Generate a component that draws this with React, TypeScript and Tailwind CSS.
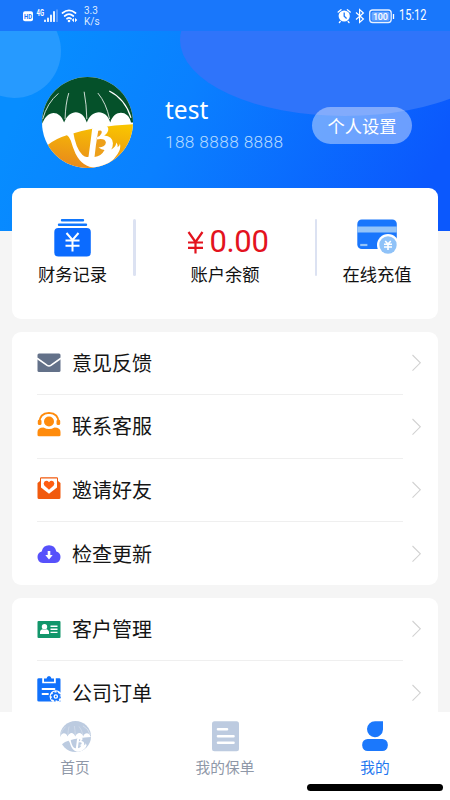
import type { ReactNode } from "react";

const Logo = ({ className, gray }: { className: string; gray?: boolean }) => (
  <svg className={className} viewBox="37 34 272 272">
    <defs>
      <clipPath id={gray ? "clip-gray" : "clip-color"}>
        <circle cx="173" cy="170" r="136" />
      </clipPath>
      <linearGradient id="gold" x1="0.7" y1="0" x2="0.4" y2="1">
        <stop offset="0" stopColor="#f9c400" />
        <stop offset="1" stopColor="#e8891c" />
      </linearGradient>
    </defs>
    <g clipPath={gray ? "url(#clip-gray)" : "url(#clip-color)"}>
      <rect x="37" y="34" width="272" height="272" fill="#fff" />
      <path
        d="M30 30H316V170H303C296 133 253 130 241 170C230 129 185 129 171 170C158 129 119 129 103 170C91 132 52 130 38 174Z"
        fill={gray ? "#bccbe0" : "#05512a"}
      />
      <path
        d="M54 237Q80 217 111 208Q200 179 316 175V310H54Z"
        fill={gray ? "#bccbe0" : "url(#gold)"}
      />
      <g fill="none" stroke="#fff" strokeWidth="2.4">
        <path d="M39 160Q52 112 86 83M106 160Q107 115 117 82M171 160Q170 115 163 78M239 160Q229 112 204 82" />
        <path d="M303 156Q286 100 238 76" strokeWidth="3.4" />
      </g>
      <path
        d="M108 204L130 197Q138 249 158 267Q168 276 176 272L183 220L187 188Q196 180 211 178Q231 176 235 187Q237 199 223 209Q248 211 249 232Q249 244 244 251Q258 243 259 230Q264 236 263 244Q270 239 270 233Q274 248 263 264Q242 300 197 305Q158 305 137 263Q129 245 123 224Q119 212 108 204Z"
        fill="#fff"
      />
      <path
        d="M205 195Q218 191 215 202Q212 210 201 214L200 221Q226 216 228 230Q227 243 206 245Q215 252 224 252Q214 271 194 273L198 239Z"
        fill={gray ? "#bccbe0" : "#eda01a"}
      />
    </g>
  </svg>
);

const StatusBar = () => (
  <div className="flex h-[31px] items-center justify-between bg-[#1977fb] pr-[14px] pl-[23px] text-white">
    <div className="flex items-center">
      <svg width="56" height="18" viewBox="0 0 56 18">
        <rect x="0" y="4.2" width="10" height="10" rx="2" fill="#fff" />
        <text x="1" y="11.7" fontSize="6.5" fontWeight="700" fill="#1977fb" fontFamily="Roboto, sans-serif" textLength="8" lengthAdjust="spacingAndGlyphs">HD</text>
        <text x="13.6" y="8.8" fontSize="8.5" fontWeight="700" fill="#fff" fontFamily="Roboto, sans-serif" textLength="7.4" lengthAdjust="spacingAndGlyphs">4G</text>
        <path d="M22 14.2V13.5M25 14.2V11.5M28 14.2V8.5M31 14.2V4.8" stroke="#fff" strokeWidth="1.8" strokeLinecap="round" />
        <path d="M34 15V2.5" stroke="#76adfd" strokeWidth="1.3" />
        <g fill="none" stroke="#fff" strokeWidth="1.7" strokeLinecap="round">
          <path d="M39.5 6Q46 0.8 52.5 6M41.7 9Q46 5.4 50.3 9M44 11.7Q46 10.2 48 11.7" />
        </g>
        <circle cx="46" cy="14" r="1.3" fill="#fff" />
        <path d="M51 11L48.7 13.1L51 15.2ZM52 11L54.3 13.1L52 15.2Z" fill="#fff" />
      </svg>
      <div className="ml-[5px] font-[Roboto,sans-serif] text-[10px] leading-[11px] text-[#dceafe]">
        <div>3.3</div>
        <div>K/s</div>
      </div>
    </div>
    <div className="flex items-center">
      <svg width="58" height="18" viewBox="0 0 58 18">
        <circle cx="7.2" cy="9" r="5.6" fill="#fff" />
        <path d="M1.2 5L4 2.8M13.2 5L10.4 2.8M3.2 14.6L2.4 15.4M11.2 14.6L12 15.4" stroke="#fff" strokeWidth="1.4" strokeLinecap="round" />
        <path d="M7.2 5.5V9.2L9.6 11.4" fill="none" stroke="#1977fb" strokeWidth="1.3" />
        <path d="M19 5.5L26.4 12L22.6 15.4V2.6L26.4 6L19 12.5" fill="none" stroke="#fff" strokeWidth="1.2" />
        <rect x="32.7" y="3" width="21.5" height="12.5" rx="3" fill="none" stroke="#e8f1ff" strokeWidth="1.3" />
        <rect x="34.5" y="4.8" width="18" height="9" rx="1.5" fill="#6aa6ff" />
        <path d="M56.5 7V12" stroke="#fff" strokeWidth="1.3" />
        <text x="36" y="12.6" fontSize="9" fontWeight="500" fill="#fff" fontFamily="Roboto, sans-serif" textLength="14.8">100</text>
      </svg>
      <div className="ml-[4px] w-[37px] origin-left scale-x-[0.76] font-[Roboto,sans-serif] text-[14.5px] leading-[20px] whitespace-nowrap">15:12</div>
    </div>
  </div>
);

const ProfileHeader = () => (
  <div className="relative h-[200px] overflow-hidden bg-[linear-gradient(115deg,#078dff_10%,#0a80ff_40%,#0b58fd_92%)]">
    <div className="absolute top-[-27px] left-[-33px] h-[94px] w-[94px] rounded-full bg-[#269aff]" />
    <div className="absolute top-[-67px] left-[180px] h-[152px] w-[330px] rounded-[50%] bg-[#2f74fa]" />
    <div className="relative flex pt-[46px] pl-[42px]">
      <Logo className="h-[91px] w-[91px]" />
      <div className="ml-[32px] w-[147px] pt-[18px] text-white">
        <div className="font-['Noto_Sans',sans-serif] text-[24.5px] leading-[30px]">test</div>
        <div className="mt-[7px] font-[Roboto,sans-serif] text-[17.3px] leading-[20px] font-light tracking-[0.35px] whitespace-nowrap text-[#b5dbff]">188 8888 8888</div>
      </div>
      <button className="mt-[30px] h-[37px] w-[100px] rounded-full bg-white/40 text-[17.3px] leading-[37px] text-white">个人设置</button>
    </div>
  </div>
);

const RecordIcon = () => (
  <svg width="37" height="38" viewBox="0 0 37 38">
    <path d="M8 1.2H29M5 5.8H32" stroke="#1076fc" strokeWidth="2.4" strokeLinecap="round" />
    <rect x="0.3" y="9" width="36.5" height="28.5" rx="4" fill="#0b6bff" />
    <path d="M12.5 14L18.5 21L24.5 14M11.5 21.5H25.5M11.5 26.7H25.5M18.5 21V32.5" fill="none" stroke="#fff" strokeWidth="2" />
  </svg>
);

const CardIcon = () => (
  <svg width="41" height="36" viewBox="0 0 41 36">
    <rect x="0.3" y="0.5" width="39.5" height="29.5" rx="4.5" fill="#1976fc" />
    <path d="M0.3 7.5H39.8V13.5H0.3Z" fill="#94c4f8" />
    <path d="M3.2 26H10.4" stroke="#94c4f8" strokeWidth="2.2" />
    <circle cx="31" cy="26" r="11" fill="#fff" />
    <circle cx="31" cy="26" r="8.7" fill="#8fc2f8" />
    <path d="M28.2 22L31 25L33.8 22M27 25.3H35M27 28H35M31 25V31" fill="none" stroke="#fff" strokeWidth="1.6" />
  </svg>
);

const Separator = () => <div className="mt-[31px] h-[57px] w-[2.5px] rounded-full bg-[#dce2f2]" />;

const AccountCard = () => (
  <div className="relative mx-[12px] mt-[-43px] flex h-[131px] w-[425.5px] rounded-[9px] bg-white text-[17.3px] leading-[24px] text-[#111]">
    <div className="flex w-[121px] flex-col items-center pt-[31px]">
      <RecordIcon />
      <div className="mt-[5px]">财务记录</div>
    </div>
    <Separator />
    <div className="flex w-[179px] flex-col items-center pt-[36px]">
      <div className="flex items-center text-[#e3131e]">
        <svg className="mr-[6px] ml-[5px]" width="17" height="23" viewBox="0 0 17 23">
          <path d="M1.5 1L8.5 11L15.5 1M1 11.5H16M1 16.8H16M8.5 11V22.5" fill="none" stroke="#e3131e" strokeWidth="2.2" />
        </svg>
        <span className="font-[Roboto,sans-serif] text-[31px] leading-[36px] tracking-[-0.4px]">0.00</span>
      </div>
      <div className="mt-[2px]">账户余额</div>
    </div>
    <Separator />
    <div className="flex w-[120px] flex-col items-center pt-[31px]">
      <CardIcon />
      <div className="mt-[7px]">在线充值</div>
    </div>
  </div>
);

const MailIcon = () => (
  <svg width="24" height="26" viewBox="0 0 24 26">
    <rect x="0.5" y="3.5" width="23" height="18.5" rx="1.5" fill="#637189" />
    <path d="M0 8.2L10.2 15.4Q12 16.6 13.8 15.4L24 8.2" fill="none" stroke="#fff" strokeWidth="1.7" />
  </svg>
);

const ServiceIcon = () => (
  <svg className="mb-[5px]" width="24" height="26" viewBox="0 0 24 26" fill="#ff8b0c">
    <path d="M2.5 11.5Q2.5 2.2 12 1.8Q21.5 2.2 21.5 11.5" fill="none" stroke="#ff8b0c" strokeWidth="1.8" />
    <rect x="0.8" y="8.5" width="3.7" height="5.5" rx="1.5" />
    <rect x="19.5" y="8.5" width="3.7" height="5.5" rx="1.5" />
    <circle cx="12" cy="10.5" r="5" />
    <path d="M0.5 24V21Q0.5 16.5 6.5 16.5Q12 19.5 17.5 16.5Q23.5 16.5 23.5 21V24Q23.5 25.2 22 25.2H2Q0.5 25.2 0.5 24Z" />
  </svg>
);

const InviteIcon = () => (
  <svg className="mb-[1px]" width="24" height="26" viewBox="0 0 24 26">
    <path d="M0.5 7L3 5V2.5Q3 1.3 4.2 1.3H19.8Q21 1.3 21 2.5V5L23.5 7V21.5Q23.5 23 22 23H2Q0.5 23 0.5 21.5Z" fill="#f15a0e" />
    <path d="M4 2.4H20V11.5L12 17.7L4 11.5Z" fill="#fff" />
    <path d="M12 13.8L7.3 9.5Q5.8 7.4 7.5 5.5Q10 3.8 12 6.3Q14 3.8 16.5 5.5Q18.2 7.4 16.7 9.5Z" fill="#ff5d12" />
  </svg>
);

const UpdateIcon = () => (
  <svg width="24" height="26" viewBox="0 0 24 26">
    <path d="M6 22Q0.5 21.5 0.5 16Q0.5 11.8 4.7 10.6Q6 4.2 12 4.2Q18 4.2 19.3 10.6Q23.5 11.8 23.5 16Q23.5 21.5 18 22Z" fill="#5751fb" />
    <path d="M10.7 10H13.3V14H15.7L12 18.5L8.3 14H10.7Z" fill="#fff" />
  </svg>
);

const CustomerIcon = () => (
  <svg width="24" height="26" viewBox="0 0 24 26">
    <rect x="0.5" y="5" width="23" height="17" rx="1" fill="#12966b" />
    <circle cx="7.5" cy="10.7" r="2.7" fill="#fff" />
    <path d="M3 18V16.2Q3 13.5 6 13.2Q7.5 14.2 9 13.2Q12 13.5 12 16.2V18Z" fill="#fff" />
    <path d="M13.5 10.2H20.5M13.5 13.3H20.5M13.5 16.4H20.5" stroke="#fff" strokeWidth="1.4" />
  </svg>
);

const OrderIcon = () => (
  <svg className="mb-[8px]" width="24" height="28" viewBox="0 0 24 28">
    <path d="M1.8 3.2H5.2V8.2H18.8V3.2H22.2Q23.5 3.2 23.5 4.5V26.6H1.8Q0.3 26.6 0.3 25.2V4.5Q0.3 3.2 1.8 3.2Z" fill="#1071fc" />
    <path d="M7 6.8V3.6H9.5Q10 1 12 1Q14 1 14.5 3.6H17V6.8Z" fill="#1071fc" />
    <path d="M5.5 14H17.5M5.5 19H11" stroke="#fff" strokeWidth="1.8" strokeLinecap="round" />
    <circle cx="18.8" cy="21.5" r="6.2" fill="#fff" />
    <circle cx="18.8" cy="21.5" r="3.2" fill="none" stroke="#1071fc" strokeWidth="1.8" />
    <circle cx="18.8" cy="21.5" r="4.5" fill="none" stroke="#1071fc" strokeWidth="1.2" strokeDasharray="1.8 1.73" />
    <circle cx="18.8" cy="21.5" r="0.9" fill="#1071fc" />
  </svg>
);

type MenuRowProps = { icon: ReactNode; label: string; last?: boolean };

const MenuRow = ({ icon, label, last }: MenuRowProps) => (
  <div className="flex h-[63.6px] shrink-0">
    <div className={`ml-[25px] flex w-[366px] items-center ${last ? "" : "border-b-[1.5px] border-[#efefef]"}`}>
      {icon}
      <span className="ml-[11px] text-[20px] leading-[28px] text-[#151515]">{label}</span>
    </div>
    <svg className="mt-[22.5px] ml-[8px]" width="12" height="18" viewBox="0 0 12 18">
      <path d="M1.5 1L9.3 8.8L1.5 16.6" fill="none" stroke="#d2d2d2" strokeWidth="1.1" />
    </svg>
  </div>
);

const TabBar = () => (
  <div className="relative grid h-[88px] shrink-0 grid-cols-3 bg-white text-[14.7px] leading-[20px] text-[#8f98a8]">
    <div className="flex flex-col items-center pt-[9px]">
      <Logo className="h-[31px] w-[31px]" gray />
      <div className="mt-[5px]">首页</div>
    </div>
    <div className="flex flex-col items-center pt-[9px]">
      <svg width="27" height="31" viewBox="0 0 27 31">
        <rect x="0" y="0.2" width="27" height="30" rx="2.5" fill="#bdcbe0" />
        <path d="M6 8.3H15M6 15.2H21.5M6 21.8H21.5" stroke="#fff" strokeWidth="2.6" strokeLinecap="round" />
      </svg>
      <div className="mt-[5px]">我的保单</div>
    </div>
    <div className="flex flex-col items-center pt-[9px] text-[#1f78f0]">
      <svg width="26" height="31" viewBox="0 0 26 31" fill="#1b78fc">
        <path d="M13 0.2H21V8.5A8 8 0 1 1 13 0.2Z" />
        <rect x="0.2" y="18" width="25.6" height="12" rx="5.5" />
      </svg>
      <div className="mt-[5px]">我的</div>
    </div>
    <div className="absolute bottom-[9px] left-[307px] h-[7px] w-[136px] rounded-full bg-black" />
  </div>
);

function App() {
  return (
    <div className="flex h-[800px] w-[450px] flex-col overflow-hidden bg-[#f5f5f5] font-['Noto_Sans_CJK_SC',sans-serif]">
      <StatusBar />
      <div className="h-[681px] overflow-hidden">
        <ProfileHeader />
        <AccountCard />
        <div className="mx-[12px] mt-[12.5px] h-[253.5px] w-[425.5px] rounded-[9px] bg-white">
          <MenuRow icon={<MailIcon />} label="意见反馈" />
          <MenuRow icon={<ServiceIcon />} label="联系客服" />
          <MenuRow icon={<InviteIcon />} label="邀请好友" />
          <MenuRow icon={<UpdateIcon />} label="检查更新" last />
        </div>
        <div className="mx-[12px] mt-[12.5px] w-[425.5px] rounded-[9px] bg-white">
          <MenuRow icon={<CustomerIcon />} label="客户管理" />
          <MenuRow icon={<OrderIcon />} label="公司订单" last />
        </div>
      </div>
      <TabBar />
    </div>
  );
}

export default App;
